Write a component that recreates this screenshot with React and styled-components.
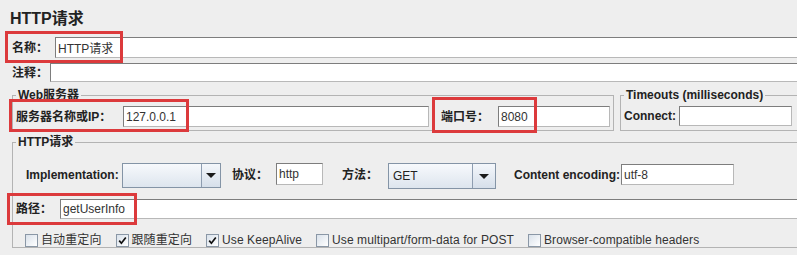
import React from "react";
import styled, { createGlobalStyle } from "styled-components";

const GlobalStyle = createGlobalStyle`
  html, body {
    margin: 0;
    background: #eeeeee;
  }
  body {
    font-family: "Liberation Sans", "Noto Sans CJK SC", sans-serif;
    font-size: 12px;
    color: #222;
  }
`;

const Page = styled.div`
  position: relative;
  width: 797px;
  height: 255px;
  overflow: hidden;
  padding-top: 9px;
  box-sizing: border-box;
`;

const Title = styled.h1`
  margin: 0 0 0 10px;
  font-size: 16px;
  line-height: 20px;
  font-weight: bold;
  color: #222;
`;

const FieldRow = styled.div`
  display: flex;
  align-items: ${p => p.$align || "center"};
  margin-top: ${p => p.$top || 0}px;
  padding-left: ${p => p.$indent || 0}px;
`;

const Label = styled.span`
  flex: none;
  box-sizing: border-box;
  width: ${p => p.$w}px;
  margin-left: ${p => p.$ml || 0}px;
  height: ${p => (p.$h ? p.$h + "px" : "auto")};
  line-height: ${p => (p.$h ? p.$h + "px" : "16px")};
  font-weight: bold;
  white-space: nowrap;
  color: #222;
`;

const TextField = styled.input`
  flex: ${p => (p.$w ? "none" : "1")};
  width: ${p => (p.$w ? p.$w + "px" : "auto")};
  min-width: 0;
  height: ${p => p.$h || 21}px;
  margin: ${p => p.$mt || 0}px ${p => (p.$w || p.$inner ? 0 : -3)}px 0 0;
  box-sizing: border-box;
  padding: 0 2px;
  border: 1px solid;
  border-color: #7d7d7d #b8b8b8 #b8b8b8 #7d7d7d;
  border-radius: 0;
  background: #fff;
  font: 12px "Liberation Sans", "Noto Sans CJK SC", sans-serif;
  color: #333;
  outline: none;
`;

const GroupRow = styled.div`
  display: flex;
  gap: 6px;
  margin-top: 6px;
  padding-left: 12px;
`;

const Group = styled.fieldset`
  flex: none;
  margin: ${p => p.$mt || 0}px 0 0 ${p => p.$ml || 0}px;
  min-width: 0;
  width: ${p => p.$w}px;
  box-sizing: border-box;
  border: 1px solid #b3b3b3;
  padding: ${p => p.$pad};
`;

const Legend = styled.legend`
  padding: 0 2px;
  font-weight: bold;
  font-size: 12px;
  line-height: 14px;
  color: #222;
`;

const Combo = styled.div`
  flex: none;
  display: flex;
  box-sizing: border-box;
  width: ${p => p.$w}px;
  height: ${p => p.$h}px;
  border: 1px solid #8494a6;
  background: linear-gradient(#f7f9fc, #dde5ee);
`;

const ComboValue = styled.span`
  flex: 1;
  padding-left: 4px;
  display: flex;
  align-items: center;
  color: #222;
`;

const ComboArrow = styled.span`
  flex: none;
  width: ${p => p.$w}px;
  display: flex;
  align-items: center;
  justify-content: center;
  border-left: 1px solid #8e9db0;
  background: linear-gradient(#f4f7fb, #d6dfea);

  &::after {
    content: "";
    border-left: 5px solid transparent;
    border-right: 5px solid transparent;
    border-top: 5px solid #1a1a1a;
  }
`;

const CheckRow = styled.div`
  display: flex;
  align-items: center;
  margin-top: 14px;
  padding-left: 9px;
  gap: 14px;
`;

const CheckItem = styled.label`
  display: flex;
  align-items: center;
  gap: 3px;
  font-size: 12px;
  letter-spacing: 0.1px;
  line-height: 14px;
  white-space: nowrap;
  color: #333;
`;

const Box = styled.span`
  flex: none;
  width: 13px;
  height: 13px;
  box-sizing: border-box;
  border: 1px solid #8a97a6;
  background: linear-gradient(135deg, #d9e1ea, #ffffff);
  display: flex;
  align-items: center;
  justify-content: center;
`;

const Mark = styled.span`
  position: absolute;
  left: ${p => p.$x}px;
  top: ${p => p.$y}px;
  width: ${p => p.$w}px;
  height: ${p => p.$h}px;
  box-sizing: border-box;
  border: 3px solid #dc3a3c;
  pointer-events: none;
`;

const Check = ({ checked, children }) => (
  <CheckItem>
    <Box>
      {checked && (
        <svg width="9" height="9" viewBox="0 0 9 9">
          <path d="M1.2 4.6 L3.4 7.2 L7.8 1.4" fill="none" stroke="#111" strokeWidth="1.7" />
        </svg>
      )}
    </Box>
    {children}
  </CheckItem>
);

// red annotation frames drawn over the form
const marks = [
  { x: 5, y: 31, w: 118, h: 32 },
  { x: 9, y: 99, w: 180, h: 33 },
  { x: 432, y: 97, w: 105, h: 36 },
  { x: 7, y: 193, w: 130, h: 32 },
];

export default function App() {
  return (
    <Page>
      <GlobalStyle />
      <Title>HTTP请求</Title>

      <FieldRow $top={8} $indent={12}>
        <Label $w={43}>名称：</Label>
        <TextField readOnly value="HTTP请求" />
      </FieldRow>

      <FieldRow $top={5} $indent={12}>
        <Label $w={38}>注释：</Label>
        <TextField readOnly value="" $h={19} />
      </FieldRow>

      <GroupRow>
        <Group $w={602} $pad="4px 3px 3px 3px">
          <Legend>Web服务器</Legend>
          <FieldRow>
            <Label $w={107}>服务器名称或IP：</Label>
            <TextField readOnly value="127.0.0.1" $inner />
            <Label $w={57} $ml={12}>端口号：</Label>
            <TextField readOnly value="8080" $w={112} />
          </FieldRow>
        </Group>
        <Group $w={178} $pad="4px 4px 3px 3px">
          <Legend>Timeouts (milliseconds)</Legend>
          <FieldRow>
            <Label $w={55}>Connect:</Label>
            <TextField readOnly value="" $w={113} $h={20} />
          </FieldRow>
        </Group>
      </GroupRow>

      <Group $w={820} $ml={12} $mt={4} $pad="14px 0 0 3px">
        <Legend>HTTP请求</Legend>
        <FieldRow $align="flex-start" $indent={10}>
          <Label $w={96} $h={25}>Implementation:</Label>
          <Combo $w={99} $h={25}>
            <ComboValue />
            <ComboArrow $w={18} />
          </Combo>
          <Label $w={44} $ml={11} $h={24}>协议：</Label>
          <TextField readOnly value="http" $w={47} $h={22} />
          <Label $w={46} $ml={19} $h={24}>方法：</Label>
          <Combo $w={108} $h={26}>
            <ComboValue>GET</ComboValue>
            <ComboArrow $w={22} />
          </Combo>
          <Label $w={107} $ml={18} $h={24}>Content encoding:</Label>
          <TextField readOnly value="utf-8" $w={113} $h={21} $mt={1} />
        </FieldRow>

        <FieldRow $top={10}>
          <Label $w={44}>路径：</Label>
          <TextField readOnly value="getUserInfo" $h={20} />
        </FieldRow>

        <CheckRow>
          <Check>自动重定向</Check>
          <Check checked>跟随重定向</Check>
          <Check checked>Use KeepAlive</Check>
          <Check>Use multipart/form-data for POST</Check>
          <Check>Browser-compatible headers</Check>
        </CheckRow>
      </Group>

      {marks.map((m, i) => (
        <Mark key={i} $x={m.x} $y={m.y} $w={m.w} $h={m.h} />
      ))}
    </Page>
  );
}
